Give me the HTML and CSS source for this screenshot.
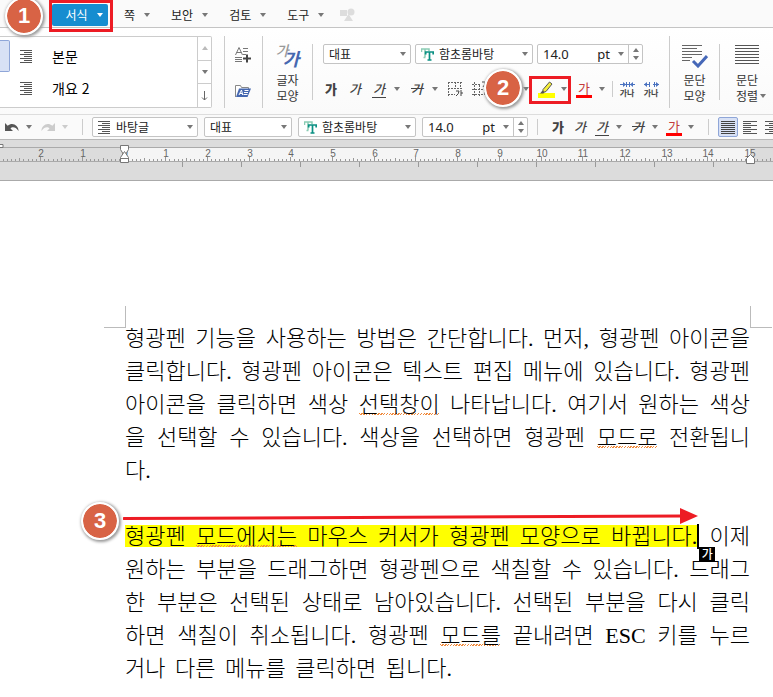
FILE: index.html
```
<!doctype html>
<html lang="ko">
  <head>
    <meta charset="UTF-8">
    <meta name="viewport" content="width=device-width, initial-scale=1.0">
    <title>형광펜 기능</title>
    <link rel="stylesheet" href="styles.css">
  </head>
  <body>
    <!-- Shared icons -->
    <svg class="defs" aria-hidden="true">
      <symbol id="style-lines" viewBox="0 0 13 13">
        <path d="M0 .5h12M4 2.5h8M0 4.5h12M4 6.5h8M0 8.5h12M4 10.5h8M0 12.5h12" stroke="#555" fill="none"/>
      </symbol>
      <symbol id="font-tt" viewBox="0 0 13 13">
        <path d="M.5 4V1h7.500v2M4 1v8M2.500 9.500h2" stroke="#8accb4" stroke-width="1.500" fill="none"/>
        <path d="M4.700 6.500V4h7.500v2.500M8.500 4v8M6.500 12h4" stroke="#0a9083" stroke-width="1.700" fill="none"/>
      </symbol>
      <symbol id="undo" viewBox="0 0 14 10">
        <path d="M0 1v8h8L5.500 6.500C7 4.600 10.500 4.500 13.500 9 13.800 3.500 7.500-.5 2.700 3.700z"/>
      </symbol>
    </svg>

    <!-- Menu -->
    <nav class="menu">
      <div class="menu-current">
        <button class="menu-item active">서식 <i class="caret"></i></button>
        <span class="frame"></span>
        <span class="badge">1</span>
      </div>
      <button class="menu-item">쪽 <i class="caret"></i></button>
      <button class="menu-item">보안 <i class="caret"></i></button>
      <button class="menu-item">검토 <i class="caret"></i></button>
      <button class="menu-item">도구 <i class="caret"></i></button>
      <svg class="shapes" width="15" height="14" viewBox="0 0 15 14" fill="#ddd"><path d="M0 2h7v6H0zM8.500 6l4.500 7H4z"/><circle cx="11" cy="4" r="3.500"/></svg>
    </nav>

    <!-- Ribbon -->
    <div class="ribbon">
      <div class="styles">
        <div class="selected-style"></div>
        <div class="style-list">
          <button><svg width="13" height="13"><use href="#style-lines"/></svg>본문</button>
          <button><svg width="13" height="13"><use href="#style-lines"/></svg>개요 2</button>
        </div>
        <div class="style-scroll">
          <button aria-label="위로"><i class="caret up"></i></button>
          <button aria-label="아래로"><i class="caret"></i></button>
          <button aria-label="모두 보기"><svg width="7" height="10" viewBox="0 0 7 10"><path d="M3.500 0v9M1 6.500l2.500 2.500L6 6.500" stroke="#666" fill="none"/></svg></button>
        </div>
      </div>
      <span class="divider first"></span>
      <div class="icon-column">
        <button class="icon" aria-label="스타일 추가">
          <svg width="17" height="16" viewBox="0 0 17 16" fill="none"><path d="M.5 8L4 .5 7.500 8M1.500 5.500h5M8 1.500h5M8 4.500h5M8 7.500h3M0 10.500h7M0 12.500h7M0 14.500h7" stroke="#777"/><path d="M12 7.500v8M8 11.500h8" stroke="#444" stroke-width="2"/></svg>
        </button>
        <button class="icon" aria-label="스타일 불러오기">
          <svg width="17" height="16" viewBox="0 0 17 16"><path d="M.5 14V2.500h5l1 2h7V6" stroke="#888" fill="#fff"/><path d="M4 5.500h12L12.500 14H1z" fill="#4668b0"/><path d="M4 12l2.500-5 1.200 5M5 10.500h2.500M9.500 7.500h4M9 9.500h4M8.500 11.500h4" stroke="#fff" fill="none"/></svg>
        </button>
      </div>
      <span class="divider"></span>
      <button class="big">
        <span class="big-icon letters"><span>가</span><b>가</b></span>
        글자<br>모양
      </button>
      <span class="divider short"></span>

      <div class="format">
        <div class="format-row combos">
          <label class="combo lang"><select aria-label="언어"><option>대표</option></select><i class="caret"></i></label>
          <label class="combo font"><svg width="13" height="13"><use href="#font-tt"/></svg><select aria-label="글꼴"><option>함초롬바탕</option></select><i class="caret"></i></label>
          <div class="combo size"><input type="text" value="14.0" aria-label="글자 크기"><span>pt</span><i class="caret"></i><span class="spin"><i class="caret up"></i><i class="caret"></i></span></div>
        </div>
        <div class="format-row">
          <button class="tool bold">가</button>
          <button class="tool italic">가</button>
          <button class="tool under"><span>가</span></button>
          <button class="drop" aria-label="밑줄 종류"><i class="caret"></i></button>
          <button class="tool strike">가</button>
          <button class="drop" aria-label="취소선 종류"><i class="caret"></i></button>
          <button class="tool" aria-label="글자 테두리">
            <svg width="15" height="16" viewBox="0 0 15 16" fill="none"><path d="M.5 1v14M7.500 1v6M12.500 1v6M0 1.500h14M0 7.500h14M0 13.500h7" stroke="#666" stroke-dasharray="2 1"/><path d="M8 10h3q0 3-3 5M13 9v6M13 12h2" stroke="#444"/></svg>
          </button>
          <button class="tool" aria-label="글자 배경">
            <svg width="15" height="16" viewBox="0 0 15 16" fill="none"><path d="M2.500 1v14M7.500 4v11M12.500 8v6M0 3.500h9M0 8.500h14M0 13.500h14" stroke="#666" stroke-dasharray="2 1"/><path d="M10 1h3q0 3-2 5" stroke="#444"/></svg>
          </button>
          <div class="covered">
            <button class="tool wide" aria-label="음영"></button>
            <span class="badge">2</span>
          </div>
          <button class="drop" aria-label="음영 종류"><i class="caret"></i></button>
          <div class="marker">
            <button class="tool" aria-label="형광펜">
              <svg width="17" height="17" viewBox="0 0 17 17"><path d="M0 12h17v5H0z" fill="#ff0"/><path d="M5 8.500L11.500 1 14 3 8 10.500 5 11.500z" fill="#f5ef3a" stroke="#555"/><path d="M2 12.500h3.500l1-1.500-2-1.500z" fill="#555"/></svg>
            </button>
            <button class="drop" aria-label="형광펜 색"><i class="caret"></i></button>
            <span class="frame"></span>
          </div>
          <button class="tool color"><span>가</span></button>
          <button class="drop" aria-label="글자 색"><i class="caret"></i></button>
          <span class="divider small"></span>
          <button class="tool spacing"><svg width="15" height="5" viewBox="0 0 15 5"><path d="M0 2.500h15M6.500 0v5M9.500 0v5" stroke="#4a72c0"/><path d="M3 0l3 2.500L3 5zM13 0l-3 2.500L13 5z" fill="#4a72c0"/></svg>가나</button>
          <button class="tool spacing"><svg width="15" height="5" viewBox="0 0 15 5"><path d="M0 2.500h6M9 2.500h6M5.500 0v5M10.500 0v5" stroke="#4a72c0"/><path d="M3 0L0 2.500 3 5zM12 0l3 2.500L12 5z" fill="#4a72c0"/></svg>가나</button>
        </div>
      </div>
      <span class="divider"></span>
      <button class="big">
        <svg class="big-icon" width="26" height="24" viewBox="0 0 26 24" fill="none"><path d="M0 1.500h20M0 4.500h15M0 7.500h20M0 10.500h20M0 13.500h10M0 16.500h8" stroke="#666"/><path d="M11 17l5 5 9-10" stroke="#4668b8" stroke-width="3"/></svg>
        문단<br>모양
      </button>
      <span class="divider short"></span>
      <button class="big last">
        <svg class="big-icon" width="24" height="24" viewBox="0 0 24 24"><path d="M0 1.500h24M0 4.500h24M0 7.500h24M0 10.500h24M0 13.500h24M0 16.500h24M0 19.500h24" stroke="#555"/></svg>
        문단<br>정렬<i class="caret"></i>
      </button>
    </div>

    <!-- Format bar -->
    <div class="bar">
      <button class="tool" aria-label="되돌리기"><svg width="14" height="10" fill="#555"><use href="#undo"/></svg></button>
      <button class="drop" aria-label="되돌리기 목록"><i class="caret"></i></button>
      <button class="tool redo" aria-label="다시 실행"><svg width="14" height="10" viewBox="0 0 14 10" fill="#ccc"><path d="M14 1v8H6l2.500-2.500C7 4.600 3.500 4.500.5 9 .2 3.500 6.500-.5 11.300 3.700z"/></svg></button>
      <button class="drop redo" aria-label="다시 실행 목록"><i class="caret"></i></button>
      <span class="divider"></span>
      <div class="bar-combos">
        <label class="combo style"><svg width="13" height="13"><use href="#style-lines"/></svg><select aria-label="스타일"><option>바탕글</option></select><i class="caret"></i></label>
        <label class="combo lang"><select aria-label="언어"><option>대표</option></select><i class="caret"></i></label>
        <label class="combo font"><svg width="13" height="13"><use href="#font-tt"/></svg><select aria-label="글꼴"><option>함초롬바탕</option></select><i class="caret"></i></label>
        <div class="combo size"><input type="text" value="14.0" aria-label="글자 크기"><span>pt</span><i class="caret"></i><span class="spin"><i class="caret up"></i><i class="caret"></i></span></div>
      </div>
      <span class="divider"></span>
      <button class="tool bold">가</button>
      <button class="tool italic">가</button>
      <button class="tool under"><span>가</span></button>
      <button class="drop" aria-label="밑줄 종류"><i class="caret"></i></button>
      <button class="tool strike">가</button>
      <button class="drop" aria-label="취소선 종류"><i class="caret"></i></button>
      <button class="tool color"><span>가</span></button>
      <button class="drop" aria-label="글자 색"><i class="caret"></i></button>
      <span class="divider"></span>
      <button class="align on" aria-label="양쪽 정렬"><svg width="14" height="13" viewBox="0 0 14 13"><path d="M0 .5h14M0 2.500h14M0 4.500h14M0 6.500h14M0 8.500h14M0 10.500h14M0 12.500h14" stroke="#444"/></svg></button>
      <button class="align" aria-label="왼쪽 정렬"><svg width="14" height="13" viewBox="0 0 14 13"><path d="M0 .5h14M0 2.500h8M0 4.500h14M0 6.500h8M0 8.500h14M0 10.500h8M0 12.500h14" stroke="#555"/></svg></button>
      <button class="align" aria-label="오른쪽 정렬"><svg width="14" height="13" viewBox="0 0 14 13"><path d="M0 .5h14M4 2.500h10M0 4.500h14M4 6.500h10M0 8.500h14M4 10.500h10M0 12.500h14" stroke="#555"/></svg></button>
    </div>

    <svg id="ruler" class="ruler"></svg>

    <!-- Document -->
    <main class="page">
      <span class="corner left"></span>
      <span class="corner right"></span>
      <p>
        <span class="line">형광펜 기능을 사용하는 방법은 간단합니다. 먼저, 형광펜 아이콘을</span>
        <span class="line">클릭합니다. 형광펜 아이콘은 텍스트 편집 메뉴에 있습니다. 형광펜</span>
        <span class="line">아이콘을 클릭하면 색상 <span class="spell">선택창이</span> 나타납니다. 여기서 원하는 색상</span>
        <span class="line">을 선택할 수 있습니다. 색상을 선택하면 형광펜 <span class="spell">모드로</span> 전환됩니</span>
        <span class="line end">다.</span>
      </p>
      <p class="marked">
        <span class="badge">3</span>
        <svg class="arrow" width="575" height="18" viewBox="0 0 575 18"><path d="M1 11.500L560 9" stroke="#ed1c24" stroke-width="3" stroke-linecap="round"/><path d="M557 1l18 8-18 8z" fill="#ed1c24"/></svg>
        <span class="line"><mark>형광펜 <span class="spell">모드에서는</span> 마우스 커서가 형광펜 모양으로 바뀝니다.<span class="ime">가</span></mark> 이제</span>
        <span class="line">원하는 부분을 드래그하면 형광펜으로 색칠할 수 있습니다. 드래그</span>
        <span class="line">한 부분은 선택된 상태로 남아있습니다. 선택된 부분을 다시 클릭</span>
        <span class="line">하면 색칠이 취소됩니다. 형광펜 <span class="spell">모드를</span> 끝내려면 <span class="key">ESC</span> 키를 누르</span>
        <span class="line tail">거나 다른 메뉴를 클릭하면 됩니다.</span>
      </p>
    </main>

    <script src="ruler.js"></script>
  </body>
</html>
```
FILE: styles.css
```
* {
  box-sizing: border-box;
}
body {
  margin: 0;
  background: #fff;
  color: #222;
  font-family: "Noto Sans CJK KR", sans-serif;
  font-size: 12px;
  line-height: 16px;
  overflow-x: hidden;
}
button, select, input {
  margin: 0;
  padding: 0;
  border: none;
  background: none;
  color: inherit;
  font: inherit;
}
svg {
  display: block;
  flex: none;
}
.defs {
  position: absolute;
  width: 0;
  height: 0;
}

/* small triangles */
.caret {
  flex: none;
  width: 0;
  height: 0;
  border: 3px solid transparent;
  border-top: 4px solid #777;
  border-bottom: none;
}
.caret.up {
  border-top: none;
  border-bottom: 4px solid #777;
}

/* red frames and numbered badges */
.frame {
  position: absolute;
  inset: -4px -5px -6px -3px;
  border: 3px solid #ed1c24;
  pointer-events: none;
}
.badge {
  position: absolute;
  z-index: 2;
  width: 38px;
  height: 38px;
  border: 2px solid #fff;
  border-radius: 50%;
  background: #d86345;
  background-clip: padding-box;
  box-shadow: 1px 1px 3px 1px #999;
  color: #fff;
  font: bold 22px/34px "Liberation Sans", sans-serif;
  text-align: center;
}

/* menu */
.menu {
  display: flex;
  align-items: center;
  gap: 21px;
  height: 28px;
  padding: 3px 0 0 52px;
  border-bottom: 1px solid #c4c4c4;
  background: #fafafa;
}
.menu-current {
  position: relative;
  margin-right: -5px;
}
.menu-item {
  display: flex;
  align-items: center;
  gap: 9px;
  flex: none;
  height: 22px;
}
.menu-item.active {
  width: 56px;
  padding-left: 8px;
  justify-content: center;
  border-radius: 2px;
  background: #168dd0;
  color: #fff;
}
.active .caret {
  border-top-color: #fff;
}
.menu-current .badge {
  left: -47px;
  top: -7px;
}
.shapes {
  margin-left: -5px;
}

/* ribbon */
.ribbon {
  display: flex;
  align-items: flex-start;
  height: 87px;
  padding: 8px 0 6px;
  border-bottom: 1px solid #ddd;
  background: linear-gradient(#fff, #fafafa);
}
.ribbon > * {
  flex: none;
}
.divider {
  flex: none;
  width: 1px;
  height: 72px;
  background: #ccc;
}
.divider.first {
  margin-left: 12px;
}
.divider.short {
  height: 56px;
  margin-top: 8px;
}
.divider.small {
  height: 16px;
  margin: 0 2px;
}
.styles {
  display: flex;
  width: 212px;
  height: 72px;
  border: 1px solid #ccc;
  border-left: none;
  border-radius: 0 2px 2px 0;
  background: #fff;
}
.selected-style {
  width: 10px;
  height: 32px;
  margin-top: 3px;
  border: 1px solid #8fa6d8;
  border-left: none;
  border-radius: 0 2px 2px 0;
  background: #d8e1f5;
}
.style-list {
  flex: 1;
  padding: 3px 0;
}
.style-list button {
  display: flex;
  align-items: center;
  gap: 19px;
  width: 100%;
  height: 32px;
  padding-left: 10px;
  font-size: 14px;
  color: #000;
}
.style-scroll {
  width: 14px;
  display: flex;
  flex-direction: column;
  border-left: 1px solid #ccc;
}
.style-scroll button {
  flex: 1;
  display: flex;
  align-items: center;
  justify-content: center;
}
.style-scroll button + button {
  border-top: 1px solid #ccc;
}
.style-scroll .up {
  border-bottom-color: #bbb;
}
.icon-column {
  width: 37px;
  display: flex;
  flex-direction: column;
  align-items: center;
  gap: 20px;
  padding-top: 11px;
}
.big {
  width: 49px;
  padding-top: 8px;
  text-align: center;
  color: #333;
}
.big.last {
  width: 54px;
}
.big-icon {
  display: block;
  height: 24px;
  margin: 0 auto 4px;
}
.big .caret {
  display: inline-block;
  margin: 0 -8px 3px 2px;
}
.letters {
  display: flex;
  justify-content: center;
  font-size: 14px;
  font-style: italic;
  font-weight: 500;
  line-height: 12px;
  color: #999;
}
.letters b {
  margin: 8px 0 0 -6px;
  font-size: 18px;
  color: #4668b0;
}

/* boxes with a drop-down */
.combo {
  display: flex;
  align-items: center;
  flex: none;
  height: 20px;
  padding: 0 4px 0 5px;
  border: 1px solid #c4c4c4;
  border-radius: 2px;
  background: #fff;
}
.combo select {
  flex: 1;
  min-width: 0;
  height: 18px;
  appearance: none;
}
.combo svg {
  margin-right: 5px;
}
.lang {
  width: 88px;
}
.font {
  width: 118px;
}
.style {
  width: 106px;
}
.size {
  width: 106px;
  padding-right: 0;
  font-family: "Noto Sans", sans-serif;
  font-size: 13px;
}
.size input {
  flex: 1;
  min-width: 0;
  height: 18px;
}
.size > .caret {
  margin: 0 4px 0 8px;
}
.spin {
  display: flex;
  flex-direction: column;
  align-items: center;
  justify-content: space-between;
  width: 14px;
  height: 18px;
  padding: 3px 0;
  border-left: 1px solid #c4c4c4;
}

/* character format buttons */
.format {
  width: 356px;
  padding: 8px 0 0 6px;
}
.format-row {
  display: flex;
  align-items: center;
  height: 24px;
}
.combos {
  gap: 4px;
  height: 20px;
  margin-bottom: 13px;
  padding-left: 4px;
}
.tool {
  display: flex;
  align-items: center;
  justify-content: center;
  flex: none;
  width: 24px;
  height: 20px;
  color: #444;
  font-size: 13px;
}
.tool.wide {
  width: 29px;
}
.bold {
  font-weight: 900;
}
.italic, .under, .strike {
  font-style: italic;
  font-weight: 500;
}
.under span {
  border-bottom: 1px solid #444;
  padding: 0 1px;
}
.strike {
  text-decoration: line-through;
}
.color span {
  width: 16px;
  height: 17px;
  border-bottom: 3px solid #f00;
  color: #c43a3a;
  line-height: 13px;
}
.drop {
  display: flex;
  align-items: center;
  justify-content: center;
  flex: none;
  width: 14px;
  height: 20px;
  padding-right: 3px;
}
.tool.spacing {
  flex-direction: column;
  gap: 1px;
  font-size: 8px;
  line-height: 9px;
  font-weight: bold;
}
.covered, .marker {
  position: relative;
  display: flex;
}
.covered .badge {
  left: -7px;
  top: -10px;
}
.marker .frame {
  inset: -3px 1px -5px -5px;
}

/* format bar */
.bar {
  display: flex;
  align-items: center;
  height: 25px;
  padding-left: 1px;
  border-bottom: 1px solid #b8b8b8;
  background: #fafafa;
}
.bar .tool {
  width: 22px;
}
.bar .divider {
  height: 16px;
  margin: 0 9px;
}
.bar-combos {
  display: flex;
  gap: 6px;
}
.redo .caret {
  border-top-color: #ccc;
}
.align {
  display: flex;
  align-items: center;
  justify-content: center;
  flex: none;
  width: 20px;
  height: 20px;
  margin-right: 2px;
  border: 1px solid transparent;
  border-radius: 2px;
}
.align.on {
  border-color: #8fa6d8;
  background: #d8e1f5;
}

/* ruler */
.ruler {
  width: 100%;
  height: 41px;
  background: #dcdcdc;
  border-bottom: 1px solid #aaa;
  font-family: "Liberation Sans", sans-serif;
  font-size: 10px;
}

/* document */
.page {
  position: relative;
  width: 625px;
  margin: 141px 0 0 125px;
  color: #000;
  font-family: "Liberation Serif", "Noto Sans CJK KR", serif;
  font-weight: 300;
  font-size: 22px;
  line-height: 33px;
}
.corner {
  position: absolute;
  top: -16px;
  width: 22px;
  height: 22px;
  border-bottom: 1px solid #bbb;
}
.corner.left {
  right: 100%;
  margin-right: -1px;
  border-right: 1px solid #bbb;
}
.corner.right {
  left: 100%;
  border-left: 1px solid #bbb;
}
.page p {
  position: relative;
  margin: 0 0 33px;
}
.page .marked {
  margin-bottom: 0;
}
.line {
  display: block;
  white-space: nowrap;
  text-align: justify;
  text-align-last: justify;
}
.line.end {
  text-align-last: left;
}
.line.tail {
  width: 327px;
}
.key {
  font-family: "Times New Roman", "Liberation Serif", serif;
  font-weight: 400;
}
.spell {
  background: repeating-linear-gradient(135deg, #f08a3c 0 1px, transparent 1px 2px) 0 21px / 100% 2px no-repeat;
}
mark {
  position: relative;
  border-right: 2px solid #000;
  background: linear-gradient(#ff0, #ff0) 0 1px / 100% 22px no-repeat;
  color: inherit;
}
.ime {
  position: absolute;
  left: 100%;
  top: 23px;
  width: 16px;
  height: 15px;
  margin-left: 2px;
  background: #000;
  color: #fff;
  font-family: "Noto Sans CJK KR", sans-serif;
  font-size: 12px;
  font-weight: 500;
  line-height: 14px;
  text-align: center;
  text-align-last: center;
}
.marked .badge {
  left: -44px;
  top: -18px;
}
.arrow {
  position: absolute;
  left: -2px;
  top: -13px;
}
```
FILE: ruler.js
```
const ruler = document.getElementById('ruler');
const start = 124.5;
const cm = 41.7;
const end = start + cm * 15;

let html = `<rect x="${start}" y="8" width="${end - start}" height="13" fill="#f5f5f5"/>`;
html += '<path d="M0 7.5H3000M0 21.5H3000" stroke="#aaa"/>';

// Ticks, ten to a centimetre
for (let i = -30; i <= 160; i++) {
  const x = Math.round(start + i * cm / 10) - 0.5;
  const height = i % 10 === 0 ? 4 : i % 5 === 0 ? 3 : 2;
  html += `<path d="M${x} 21v-${height}" stroke="#999"/>`;
}

// Numbers
for (let n = -2; n <= 15; n++) {
  html += `<text x="${Math.round(start + n * cm)}" y="17" text-anchor="middle" fill="#666">${Math.abs(n)}</text>`;
}

// Default tab stops
for (let i = 1; i <= 10; i++) {
  html += `<path d="M${Math.round(start + i * 58.9) - 0.5} 22v5" stroke="#999"/>`;
}

// Indent handles
html += '<path d="M-1 4.500h4v3h-4z" fill="#fff" stroke="#777"/>';
html += '<path d="M120.500 5.500h8v4l-3 5h-2l-3-5z" fill="#fff" stroke="#777"/>';
html += '<path d="M124.500 11.500l4 6v5h-8v-5zM120.500 18.500h8" fill="#fff" stroke="#777"/>';
html += '<path d="M750.500 14.500l4 4v5h-8v-5z" fill="#fff" stroke="#777"/>';

ruler.innerHTML = html;
```
